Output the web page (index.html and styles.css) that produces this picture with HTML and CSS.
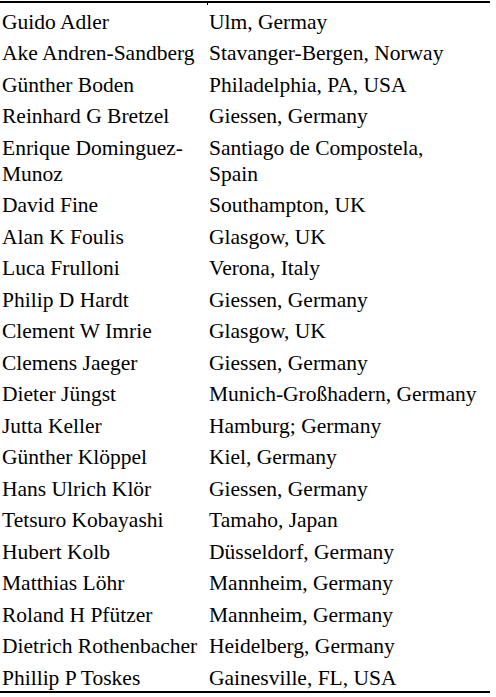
FILE: index.html
```html
<!DOCTYPE html>
<html>
<head>
<meta charset="utf-8">
<link rel="stylesheet" href="styles.css">
</head>
<body>
<div class="list">
  <div class="row first"><span class="who">Guido Adler</span><span class="where">Ulm, Germay</span></div>
  <div class="row"><span class="who">Ake Andren-Sandberg</span><span class="where">Stavanger-Bergen, Norway</span></div>
  <div class="row"><span class="who">Günther Boden</span><span class="where">Philadelphia, PA, USA</span></div>
  <div class="row"><span class="who">Reinhard G Bretzel</span><span class="where">Giessen, Germany</span></div>
  <div class="row"><span class="who">Enrique Dominguez-Munoz</span><span class="where">Santiago de Compostela,<br>Spain</span></div>
  <div class="row"><span class="who">David Fine</span><span class="where">Southampton, UK</span></div>
  <div class="row"><span class="who">Alan K Foulis</span><span class="where">Glasgow, UK</span></div>
  <div class="row"><span class="who">Luca Frulloni</span><span class="where">Verona, Italy</span></div>
  <div class="row"><span class="who">Philip D Hardt</span><span class="where">Giessen, Germany</span></div>
  <div class="row"><span class="who">Clement W Imrie</span><span class="where">Glasgow, UK</span></div>
  <div class="row"><span class="who">Clemens Jaeger</span><span class="where">Giessen, Germany</span></div>
  <div class="row"><span class="who">Dieter Jüngst</span><span class="where">Munich-Großhadern, Germany</span></div>
  <div class="row"><span class="who">Jutta Keller</span><span class="where">Hamburg; Germany</span></div>
  <div class="row"><span class="who">Günther Klöppel</span><span class="where">Kiel, Germany</span></div>
  <div class="row"><span class="who">Hans Ulrich Klör</span><span class="where">Giessen, Germany</span></div>
  <div class="row"><span class="who">Tetsuro Kobayashi</span><span class="where">Tamaho, Japan</span></div>
  <div class="row"><span class="who">Hubert Kolb</span><span class="where">Düsseldorf, Germany</span></div>
  <div class="row"><span class="who">Matthias Löhr</span><span class="where">Mannheim, Germany</span></div>
  <div class="row"><span class="who">Roland H Pfützer</span><span class="where">Mannheim, Germany</span></div>
  <div class="row"><span class="who">Dietrich Rothenbacher</span><span class="where">Heidelberg, Germany</span></div>
  <div class="row last"><span class="who">Phillip P Toskes</span><span class="where">Gainesville, FL, USA</span></div>
</div>
</body>
</html>
```
FILE: styles.css
```css
html, body {
  margin: 0;
  padding: 0;
  background: #ffffff;
}
body {
  padding-top: 1px;
}
.list {
  width: 490px;
  font-family: "Liberation Serif", serif;
  font-size: 21.5px;
  line-height: 26px;
  color: #000;
  border-top: 2px solid #000;
  border-bottom: 2px solid #000;
}
.row {
  display: grid;
  grid-template-columns: 207px 1fr;
  padding: 5.5px 0 0;
  position: relative;
}
.who {
  padding-left: 2px;
  padding-right: 4px;
}
.where {
  padding-left: 2px;
}
.first::after,
.last::after {
  content: "";
  position: absolute;
  left: 207px;
  width: 1px;
  background: #000;
}
.first::after { top: 0; height: 2px; }
.last::after { bottom: -7px; height: 5px; }
```
